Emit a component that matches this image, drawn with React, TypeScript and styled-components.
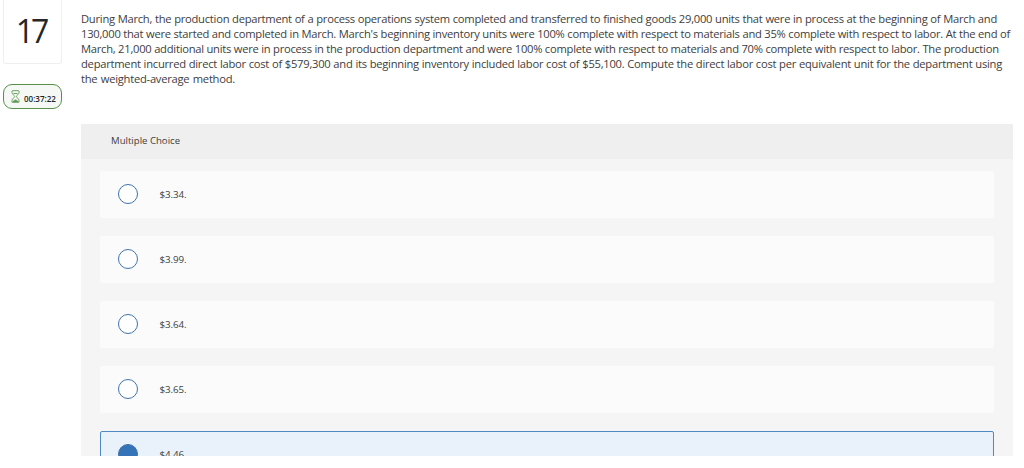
import styled, { createGlobalStyle } from "styled-components";

const GlobalStyle = createGlobalStyle`
  * {
    box-sizing: border-box;
  }
  body {
    margin: 0;
    overflow: hidden;
    background-color: #fff;
    color: #404040;
    font-family: "Open Sans", "Noto Sans", sans-serif;
  }
`;
const Page = styled.div`
  display: flex;
  width: 1024px;
  height: 456px;
  overflow: hidden;
`;
const Sidebar = styled.aside`
  flex: none;
  width: 81px;
  padding-left: 3px;
`;
const QuestionNumber = styled.div`
  width: 59px;
  height: 64px;
  padding: 10px 3px 0 0;
  border: 1px solid #efefef;
  border-top: none;
  border-radius: 0 0 3px 3px;
  color: #262626;
  font-size: 32px;
  line-height: 42px;
  letter-spacing: -3px;
  text-align: center;
`;
const Timer = styled.div`
  display: flex;
  align-items: center;
  width: 59px;
  height: 25px;
  margin-top: 20px;
  padding-left: 7px;
  border: 1px solid #559148;
  border-radius: 9px;
  background-color: #f6f8f6;
`;
const TimerValue = styled.span`
  margin: 3px 0 0 4px;
  color: #222;
  font-size: 8px;
  font-weight: 600;
`;
const Main = styled.main`
  flex: none;
  width: 932px;
`;
const Question = styled.div`
  height: 124px;
  padding-top: 10.5px;
`;
const QuestionLine = styled.div<{ $width: number }>`
  width: ${(props) => props.$width}px;
  height: 15.2px;
  font-size: 11.2px;
  line-height: 15.2px;
  letter-spacing: -0.25px;
  white-space: nowrap;
  text-align: justify;
  text-align-last: justify;
`;
const Panel = styled.section`
  height: 332px;
  background-color: #f5f5f5;
`;
const PanelHeader = styled.div`
  height: 35px;
  padding-left: 30px;
  background-color: #efefef;
  font-size: 9.6px;
  line-height: 34px;
`;
const Options = styled.div`
  display: flex;
  flex-direction: column;
  gap: 18px;
  padding: 12px 19px 0;
`;
const Option = styled.label<{ $selected: boolean }>`
  display: flex;
  flex: none;
  align-items: center;
  height: 47px;
  padding-bottom: 1px;
  padding-left: ${(props) => (props.$selected ? 17 : 18)}px;
  border: ${(props) => (props.$selected ? "1px solid #5088c2" : "none")};
  border-radius: 2px;
  background-color: ${(props) => (props.$selected ? "#e9f1fb" : "#fbfbfb")};
  font-size: 9.8px;
  letter-spacing: -0.1px;
`;
const Radio = styled.span<{ $selected: boolean }>`
  width: 20px;
  height: 20px;
  margin-right: 21.5px;
  border: 1px solid #3f74ac;
  border-radius: 50%;
  background-color: ${(props) => (props.$selected ? "#3573b9" : "#fff")};
`;

const questionLines = [
  { text: "During March, the production department of a process operations system completed and transferred to finished goods 29,000 units that were in process at the beginning of March and", width: 916 },
  { text: "130,000 that were started and completed in March. March's beginning inventory units were 100% complete with respect to materials and 35% complete with respect to labor. At the end of", width: 929 },
  { text: "March, 21,000 additional units were in process in the production department and were 100% complete with respect to materials and 70% complete with respect to labor. The production", width: 917 },
  { text: "department incurred direct labor cost of $579,300 and its beginning inventory included labor cost of $55,100. Compute the direct labor cost per equivalent unit for the department using", width: 921 },
  { text: "the weighted-average method.", width: 154 },
];

const options = ["$3.34.", "$3.99.", "$3.64.", "$3.65.", "$4.46."];
const selectedOption = "$4.46.";

const IconHourglass = () => (
  <svg width="9" height="13" viewBox="0 0 9 13" fill="none" stroke="#5b9850" strokeWidth="0.9">
    <path d="M1.2 0.7h6.6M0.8 12.3h7.4M1 1v1.5c0 2 2.6 2.7 2.6 4S1 8.5 1 10.5V12M8 1v1.5c0 2-2.6 2.7-2.6 4s2.6 2 2.6 4V12" />
    <path fill="#5b9850" d="M2.5 3.5h4M2 11.7c0-1 2.5-1.3 2.5-2 0 .7 2.5 1 2.5 2z" />
  </svg>
);

export default function App() {
  return (
    <>
      <GlobalStyle />
      <Page>
        <Sidebar>
          <QuestionNumber>17</QuestionNumber>
          <Timer>
            <IconHourglass />
            <TimerValue>00:37:22</TimerValue>
          </Timer>
        </Sidebar>
        <Main>
          <Question>
            {questionLines.map((line) => (
              <QuestionLine key={line.text} $width={line.width}>{line.text}</QuestionLine>
            ))}
          </Question>
          <Panel>
            <PanelHeader>Multiple Choice</PanelHeader>
            <Options>
              {options.map((option) => (
                <Option key={option} $selected={option === selectedOption}>
                  <Radio $selected={option === selectedOption} />
                  {option}
                </Option>
              ))}
            </Options>
          </Panel>
        </Main>
      </Page>
    </>
  );
}
